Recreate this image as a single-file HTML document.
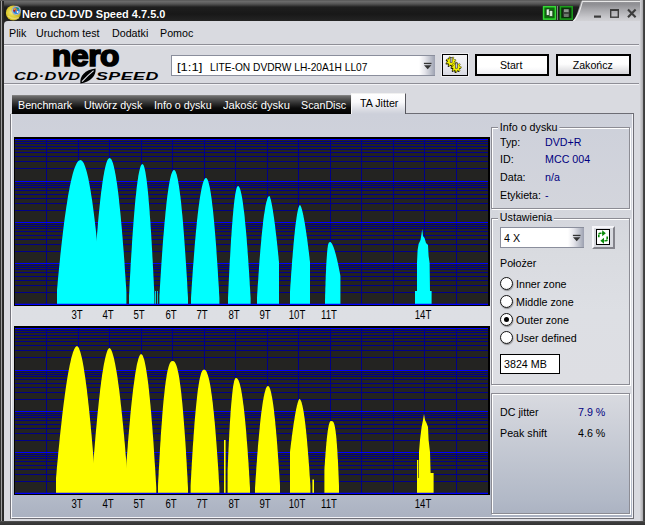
<!DOCTYPE html>
<html lang="pl">
<head>
<meta charset="utf-8">
<title>Nero CD-DVD Speed 4.7.5.0</title>
<style>
html,body{margin:0;padding:0;}
body{width:645px;height:525px;overflow:hidden;background:#3c3c3c;position:relative;
 font-family:"Liberation Sans",sans-serif;font-size:11.5px;color:#000;}
div,span{box-sizing:border-box;}
.abs{position:absolute;}
#win{position:absolute;left:0;top:0;width:645px;height:525px;overflow:hidden;}
#frameL{position:absolute;left:0;top:1px;width:4.3px;height:524px;background:linear-gradient(90deg,#303030 0,#303030 .9px,#9c9c9c 1.1px,#9c9c9c 2px,#2c2c2c 2.3px,#242424 4.3px);}
#frameR{position:absolute;left:640px;top:0;width:5px;height:525px;background:linear-gradient(90deg,#d2d2d6 0,#c6c6ca 1px,#b8b8bc 2px,#a4a4a8 3.1px,#484848 3.4px,#383838 5px);}
#frameB{position:absolute;left:0;top:521px;width:645px;height:4px;background:linear-gradient(180deg,#555 0,#3c3c3c 1.5px,#333 4px);}
#client{position:absolute;left:4px;top:21px;width:637px;height:500px;background:#d9dae0;border-top-left-radius:4px;}
#title{position:absolute;left:0;top:0;width:645px;height:22px;background:linear-gradient(180deg,#4c4c4c 0,#6e6e6e 1px,#666 2px,#585858 3.5px,#444 5px,#2c2c2c 6.2px,#1e1e1e 7.5px,#181818 14px,#242424 21px,#2c2c2c 22px);}
#titleR{position:absolute;left:574px;top:0;width:71px;height:22px;}
#ttext{position:absolute;left:22px;top:6px;transform:scaleX(.972);transform-origin:0 0;height:16px;line-height:16px;font-weight:bold;font-size:11.3px;color:#fff;white-space:nowrap;text-shadow:0 0 1px #000;}
.menu{position:absolute;top:25.2px;transform:scaleX(.93);transform-origin:0 0;height:16px;line-height:16px;font-size:11.5px;white-space:nowrap;color:#000;}
.sep{position:absolute;left:4px;width:635px;height:2px;border-top:1px solid #8e8e96;border-bottom:1px solid #f2f2f6;}
.txt{position:absolute;white-space:nowrap;transform:scaleX(.93);transform-origin:0 0;height:14px;line-height:14px;font-size:11.5px;}
.nv{color:#000080;}
.tab{position:absolute;z-index:3;top:98px;transform:scaleX(.93);transform-origin:0 0;height:14px;line-height:14px;color:#fff;font-size:11.5px;white-space:nowrap;}
.tl{position:absolute;width:40px;transform:scaleX(.8);transform-origin:50% 0;text-align:center;height:14px;line-height:14px;font-size:12px;white-space:nowrap;}
.grp{position:absolute;border:1px solid #8c8c94;box-shadow:1px 1px 0 #fff, inset 1px 1px 0 #fff;}
.radio{position:absolute;width:13px;height:13px;border-radius:50%;border:1.5px solid #141414;background:radial-gradient(circle at 50% 40%,#fff 0,#fff 55%,#dcdcdc 100%);box-shadow:0.5px 1px 1px rgba(0,0,0,.35);}
.btn{position:absolute;border:2px solid #000;background:linear-gradient(180deg,#fff 0,#fdfdfd 45%,#d4d4d8 100%);text-align:center;font-size:11.5px;}
.bt{display:inline-block;transform:scaleX(.92);transform-origin:50% 50%;}
</style>
</head>
<body>
<div id="win">
 <div id="title"></div>
 <svg class="abs" style="left:558px;top:0" width="87" height="23" viewBox="0 0 87 23">
  <defs>
   <linearGradient id="tg" x1="0" y1="0" x2="0" y2="1">
    <stop offset="0" stop-color="#9a9a9e"/><stop offset="0.15" stop-color="#8e8e92"/><stop offset="0.4" stop-color="#a8a8ac"/><stop offset="0.75" stop-color="#c8c8cc"/><stop offset="1" stop-color="#d8d8dc"/>
   </linearGradient>
  </defs>
  <path d="M24 0.6 L87 0.6 L87 23 L12 23 C16.5 21 18.6 16 21 8 C22 4 23 1.6 24 0.6 Z" fill="url(#tg)"/>
  <path d="M86 1.4 L24.4 1.4 C22.4 9 20.4 17 14.6 22" stroke="#f6f6f6" stroke-width="1.1" fill="none" opacity=".85"/>
 </svg>
 <div id="frameL"></div>
 <div id="client"></div>
 <div id="frameR"></div>
 <div id="frameB"></div>

 <!-- title icon -->
 <svg class="abs" style="left:4px;top:3px" width="20" height="20" viewBox="0 0 20 20">
  <defs>
   <radialGradient id="cd" cx="42%" cy="45%" r="60%">
    <stop offset="0" stop-color="#f6ee90"/><stop offset="0.35" stop-color="#e6d84a"/><stop offset="0.8" stop-color="#d4c020"/><stop offset="1" stop-color="#9c8a10"/>
   </radialGradient>
  </defs>
  <circle cx="9.4" cy="9.9" r="7.5" fill="url(#cd)"/>
  <path d="M4 13 C7 15.5 11 16.5 15 14.5" stroke="#f4e8a0" stroke-width="1.6" fill="none" opacity=".55"/>
  <circle cx="12.3" cy="7.5" r="4.5" fill="#c8c8cc" stroke="#8a8a90" stroke-width=".5"/>
  <circle cx="12.3" cy="7.5" r="3.4" fill="#2484dc"/>
  <path d="M9.2 7.6 L10.2 5.2 L11.6 6.4 L10.4 9.6 Z" fill="#c81a10"/>
  <path d="M9.4 6.2 l1-1 l.8 .8 l-1 1z" fill="#f8e020"/>
  <path d="M12.6 4.4 L15 5.4 L14.2 6.6 L12.4 5.8 Z" fill="#20a040"/>
  <path d="M10.6 4.8 L11.8 4.6 L13.6 8.4 L12.6 9 Z" fill="#f07030"/>
  <circle cx="13.6" cy="8.9" r="1" fill="#f4f4f4"/>
 </svg>
 <div id="ttext">Nero CD-DVD Speed 4.7.5.0</div>

 <!-- title buttons -->
 <svg class="abs" style="left:541px;top:4px" width="36" height="18" viewBox="0 0 36 18">
  <rect x="1.8" y="1.9" width="13.4" height="14" rx="1.2" fill="#0c6c0c"/>
  <rect x="2.6" y="2.7" width="11.8" height="12.4" fill="none" stroke="#34d834" stroke-width="1.5"/>
  <rect x="5.2" y="5" width="3.4" height="6.4" fill="#e4f4e4" stroke="#143814" stroke-width=".7"/>
  <rect x="8.2" y="6.4" width="3.6" height="6.2" fill="#d4ecd4" stroke="#143814" stroke-width=".7"/>
  <rect x="16" y="2" width=".8" height="14" fill="#9a9a9a"/>
  <rect x="18.6" y="1.9" width="13.4" height="14" rx="1.2" fill="#063c06"/>
  <rect x="19.4" y="2.7" width="11.8" height="12.4" fill="none" stroke="#1c9c1c" stroke-width="1.5"/>
  <rect x="21.8" y="5" width="7" height="8" fill="#3c443c" stroke="#141a14" stroke-width=".7"/>
  <rect x="23" y="5.2" width="4.6" height="2.8" fill="#8c988c"/>
  <rect x="23" y="10" width="4.6" height="3" fill="#6c786c"/>
 </svg>
 <svg class="abs" style="left:590px;top:4px" width="50" height="18" viewBox="0 0 50 18">
  <rect x="4" y="11.5" width="7" height="2.2" fill="#3c3c3c"/>
  <rect x="20.7" y="5.8" width="7.6" height="7.4" fill="none" stroke="#3c3c3c" stroke-width="1.4"/>
  <rect x="20" y="5" width="9" height="2" fill="#3c3c3c"/>
  <path d="M38 5.5 L45.6 13.3 M45.6 5.5 L38 13.3" stroke="#3c3c3c" stroke-width="2.1" fill="none"/>
 </svg>

 <!-- menu -->
 <div class="menu" style="left:9px">Plik</div>
 <div class="menu" style="left:36px">Uruchom test</div>
 <div class="menu" style="left:112px">Dodatki</div>
 <div class="menu" style="left:160px">Pomoc</div>
 <div class="sep" style="top:44px"></div>
 <div class="sep" style="top:83px"></div>

 <!-- logo -->
 <div class="abs" id="nero" style="left:52.4px;top:38.6px;height:34px;line-height:34px;font-size:29px;font-weight:bold;letter-spacing:-0.4px;color:#000;white-space:nowrap;-webkit-text-stroke:1.6px #000;transform:scaleX(1.095);transform-origin:0 0;">nero</div>
 <div class="abs" id="cd1" style="left:14px;top:68.7px;height:15px;line-height:15px;font-size:11px;font-weight:bold;font-style:italic;color:#000;white-space:nowrap;transform:scaleX(1.49);transform-origin:0 50%;letter-spacing:.3px;">CD·DVD</div>
 <div class="abs" id="cd2" style="left:96px;top:68.7px;height:15px;line-height:15px;font-size:11px;font-weight:bold;font-style:italic;color:#000;white-space:nowrap;transform:scaleX(1.62);transform-origin:0 50%;letter-spacing:.3px;">SPEED</div>
 <svg class="abs" style="left:78px;top:67px" width="20" height="18" viewBox="0 0 20 18">
  <path d="M2.4 16.4 C1.4 9.5 7 2.6 17.6 1.6 C18.4 8.4 12.6 15.4 2.4 16.4 Z" fill="#000"/>
  <path d="M4 14.6 C7.4 11 11.4 7 15.6 3.6" stroke="#d9dae0" stroke-width="1.2" fill="none"/>
 </svg>

 <!-- drive combo -->
 <div class="abs" style="left:171px;top:55px;width:264px;height:21px;border:1px solid #8a8e9c;border-right:none;background:#fff;"></div>
 <div class="abs" style="left:419px;top:56px;width:16px;height:19px;background:linear-gradient(90deg,#fff 0,#e6e6ec 35%,#b4b8c4 80%,#9ca0b0 100%);"></div>
 <svg class="abs" style="left:421.5px;top:60px" width="12" height="12" viewBox="0 0 12 12">
  <rect x="1.9" y="2.8" width="7.6" height="1.3" fill="#333"/>
  <path d="M2 5.2 L9.4 5.2 L5.7 9.2 Z" fill="#333"/>
 </svg>
 <div class="txt" id="drv0" style="left:177.3px;top:59.5px;transform:scaleX(1.13);">[1:1]</div>
 <div class="txt" id="drv" style="left:209.6px;top:59.5px;transform:scaleX(.887);">LITE-ON DVDRW LH-20A1H LL07</div>

 <!-- options button -->
 <div class="abs" style="left:442px;top:54px;width:26px;height:22px;border:1.9px solid #000;background:linear-gradient(180deg,#f6f6f8 0,#ececf0 50%,#d8d9e2 100%);box-shadow:0 0 0 1px rgba(255,255,255,.55);"></div>
 <svg class="abs" style="left:442px;top:54.6px" width="26" height="22" viewBox="0 0 26 22">
  <path d="M12.5 7.3 L13.8 8.3 L13.2 9.4 L11.7 8.9 L11.0 9.5 L11.2 11.1 L10.1 11.5 L9.3 10.1 L8.4 10.0 L7.4 11.3 L6.3 10.7 L6.8 9.2 L6.2 8.5 L4.6 8.7 L4.2 7.6 L5.6 6.8 L5.7 5.9 L4.4 4.9 L5.0 3.8 L6.5 4.3 L7.2 3.7 L7.0 2.1 L8.1 1.7 L8.9 3.1 L9.8 3.2 L10.8 1.9 L11.9 2.5 L11.4 4.0 L12.0 4.7 L13.6 4.5 L14.0 5.6 L12.6 6.4 Z" fill="#000" transform="translate(-0.7,0.8)"/>
  <path d="M17.3 14.1 L18.2 15.5 L17.2 16.3 L15.9 15.4 L15.1 15.7 L14.8 17.3 L13.5 17.2 L13.3 15.6 L12.5 15.3 L11.1 16.2 L10.3 15.2 L11.2 13.9 L10.9 13.1 L9.3 12.8 L9.4 11.5 L11.0 11.3 L11.3 10.5 L10.4 9.1 L11.4 8.3 L12.7 9.2 L13.5 8.9 L13.8 7.3 L15.1 7.4 L15.3 9.0 L16.1 9.3 L17.5 8.4 L18.3 9.4 L17.4 10.7 L17.7 11.5 L19.3 11.8 L19.2 13.1 L17.6 13.3 Z" fill="#000" transform="translate(-0.7,0.8)"/>
  <path d="M12.5 7.3 L13.8 8.3 L13.2 9.4 L11.7 8.9 L11.0 9.5 L11.2 11.1 L10.1 11.5 L9.3 10.1 L8.4 10.0 L7.4 11.3 L6.3 10.7 L6.8 9.2 L6.2 8.5 L4.6 8.7 L4.2 7.6 L5.6 6.8 L5.7 5.9 L4.4 4.9 L5.0 3.8 L6.5 4.3 L7.2 3.7 L7.0 2.1 L8.1 1.7 L8.9 3.1 L9.8 3.2 L10.8 1.9 L11.9 2.5 L11.4 4.0 L12.0 4.7 L13.6 4.5 L14.0 5.6 L12.6 6.4 Z" fill="#f4f400" stroke="#3c3a00" stroke-width=".5"/>
  <path d="M17.3 14.1 L18.2 15.5 L17.2 16.3 L15.9 15.4 L15.1 15.7 L14.8 17.3 L13.5 17.2 L13.3 15.6 L12.5 15.3 L11.1 16.2 L10.3 15.2 L11.2 13.9 L10.9 13.1 L9.3 12.8 L9.4 11.5 L11.0 11.3 L11.3 10.5 L10.4 9.1 L11.4 8.3 L12.7 9.2 L13.5 8.9 L13.8 7.3 L15.1 7.4 L15.3 9.0 L16.1 9.3 L17.5 8.4 L18.3 9.4 L17.4 10.7 L17.7 11.5 L19.3 11.8 L19.2 13.1 L17.6 13.3 Z" fill="#f4f400" stroke="#3c3a00" stroke-width=".5"/>
  <rect x="8.2" y="2.4" width="1.9" height="5.2" fill="#c8c8d0" stroke="#30303a" stroke-width=".6"/>
  <rect x="13.4" y="8" width="1.9" height="5.2" fill="#c8c8d0" stroke="#30303a" stroke-width=".6"/>
 </svg>

 <div class="btn" style="left:475px;top:54px;width:74px;height:22px;line-height:18px;background:linear-gradient(180deg,#fff 0,#fff 60%,#f0f0f4 100%);"><span class="bt" style="margin-right:2px">Start</span></div>
 <div class="btn" style="left:556px;top:54px;width:75px;height:22px;line-height:18px;"><span class="bt" style="margin-right:2px">Zakończ</span></div>

 <!-- tab strip -->
 <div class="abs" style="left:12px;top:95px;width:339px;height:19.4px;z-index:2;background:linear-gradient(180deg,#8e8e8e 0,#6a6a6a 1.5px,#4a4a4a 5px,#2a2a2a 9px,#0c0c0c 13px,#000 19px);"></div>
 <div class="tab" style="left:18.4px">Benchmark</div>
 <div class="tab" style="left:84px">Utwórz dysk</div>
 <div class="tab" style="left:154px">Info o dysku</div>
 <div class="tab" style="left:223px;transform:scaleX(.968)">Jakość dysku</div>
 <div class="tab" style="left:301px">ScanDisc</div>

 <!-- tab panel -->
 <div class="abs" style="left:10px;top:114px;width:1px;height:405px;background:#74747c;"></div>
 <div class="abs" id="panel" style="left:11px;top:113px;width:623px;height:406px;border-left:1px solid #f8f8fa;border-top:1px solid #6c6c74;border-right:1px solid #6e6e76;border-bottom:1px solid #6e6e76;background:linear-gradient(180deg,#cdd0da 0,#d3d5dc 93px,#d9dbe0 139px,#dddfe4 197px,#dddee3 268px,#b2b9c7 385px,#a9b0c0 406px);box-shadow:inset -1px -1px 0 #f4f4f8;"></div>
 <!-- active tab -->
 <div class="abs" style="left:351px;top:93px;width:55px;height:21px;border-left:1px solid #f8f8f8;border-top:1px solid #f0f0f0;border-right:1px solid #55555c;background:linear-gradient(180deg,#fff 0,#fafafc 40%,#d6d8e0 85%,#cdd0da 100%);"></div>
 <div class="txt" style="left:360px;top:96px;">TA Jitter</div>

<svg id="charts" width="645" height="525" viewBox="0 0 645 525" style="position:absolute;left:0;top:0">
<rect x="14" y="137" width="476" height="169" fill="#000"/>
<rect x="15" y="139" width="473" height="166" fill="#232321"/>
<path d="M15 168.5H488M15 161.5H488M15 156.5H488M15 152.5H488M15 149.5H488M15 146.5H488M15 143.5H488M15 141.5H488M15 210.5H488M15 203.5H488M15 198.5H488M15 194.5H488M15 190.5H488M15 187.5H488M15 185.5H488M15 183.5H488M15 251.5H488M15 244.5H488M15 239.5H488M15 235.5H488M15 231.5H488M15 228.5H488M15 226.5H488M15 224.5H488M15 292.5H488M15 285.5H488M15 280.5H488M15 276.5H488M15 272.5H488M15 269.5H488M15 267.5H488M15 265.5H488" stroke="#00008a" stroke-width="1" fill="none" shape-rendering="crispEdges"/>
<path d="M46.5 139.5V304.5M78.5 139.5V304.5M109.5 139.5V304.5M141.5 139.5V304.5M172.5 139.5V304.5M204.5 139.5V304.5M235.5 139.5V304.5M267.5 139.5V304.5M298.5 139.5V304.5M330.5 139.5V304.5M361.5 139.5V304.5M393.5 139.5V304.5M424.5 139.5V304.5M456.5 139.5V304.5" stroke="#00008a" stroke-width="1" fill="none" shape-rendering="crispEdges"/>
<path d="M15 139.5H488M15 181.5H488M15 222.5H488M15 263.5H488" stroke="#0000ff" stroke-width="1.15" fill="none"/>
<polygon points="57,304.5 57,290 57.5,284.8 57.9,279.8 58.4,274.8 58.9,269.8 59.4,265 59.9,260.2 60.3,255.6 60.8,251 61.3,246.5 61.8,242 62.3,237.7 62.8,233.5 63.3,229.3 63.8,225.3 64.3,221.3 64.8,217.4 65.4,213.6 65.9,209.9 66.4,206.4 67,202.9 67.5,199.5 68,196.2 68.6,193.1 69.2,190 69.7,187.1 70.3,184.2 70.9,181.5 71.5,178.9 72.1,176.5 72.7,174.1 73.3,172 73.9,169.9 74.6,168 75.3,166.2 76,164.7 76.7,163.3 77.5,162.1 78.3,161.1 79.2,160.4 80.4,160 81.6,160.4 82.4,161.2 83.2,162.3 83.9,163.6 84.6,165.2 85.2,166.9 85.9,168.9 86.5,171 87.1,173.3 87.7,175.7 88.3,178.3 88.8,181.1 89.4,183.9 89.9,186.9 90.5,190.1 91,193.4 91.5,196.8 92.1,200.3 92.6,203.9 93.1,207.7 93.6,211.5 94.1,215.5 94.6,219.6 95.1,223.8 95.6,228.1 96.1,232.5 96.5,237 97,241.7 97.5,246.4 98,251.2 98.4,256.1 98.9,261.1 99.3,266.2 99.8,271.4 100.3,276.7 100.7,282.1 101.2,287.6 101.6,293.1 102.1,298.8 102.5,304.5" fill="#00ffff"/>
<polygon points="92.2,304.5 92.5,298.7 92.9,293 93.3,287.3 93.6,281.8 94,276.3 94.3,271 94.7,265.7 95,260.5 95.4,255.4 95.8,250.5 96.1,245.6 96.5,240.8 96.9,236.1 97.3,231.5 97.7,227.1 98,222.7 98.4,218.4 98.8,214.3 99.2,210.3 99.6,206.3 100,202.5 100.4,198.8 100.8,195.3 101.2,191.8 101.7,188.5 102.1,185.3 102.5,182.3 103,179.3 103.4,176.6 103.9,173.9 104.3,171.5 104.8,169.2 105.3,167 105.8,165 106.3,163.3 106.8,161.7 107.4,160.3 108,159.2 108.7,158.4 109.6,158 110.5,158.4 111.1,159.1 111.7,160.1 112.3,161.4 112.8,162.8 113.3,164.4 113.8,166.2 114.2,168.2 114.7,170.3 115.1,172.6 115.6,175 116,177.5 116.4,180.2 116.9,183 117.3,185.9 117.7,188.9 118.1,192.1 118.5,195.3 118.9,198.7 119.2,202.2 119.6,205.8 120,209.5 120.4,213.3 120.8,217.2 121.1,221.2 121.5,225.3 121.9,229.4 122.2,233.7 122.6,238.1 122.9,242.6 123.3,247.1 123.7,251.8 124,256.5 124.4,261.3 124.7,266.2 125,271.2 125.4,276.3 125.7,281.4 126.1,286.7 126.4,292 126.4,304.5" fill="#00ffff"/>
<polygon points="129,304.5 129,296 129.3,290.8 129.5,285.6 129.8,280.5 130.1,275.5 130.4,270.6 130.6,265.8 130.9,261 131.2,256.4 131.5,251.8 131.8,247.3 132,242.9 132.3,238.6 132.6,234.4 132.9,230.3 133.2,226.2 133.5,222.3 133.8,218.5 134.1,214.7 134.4,211.1 134.7,207.5 135,204.1 135.3,200.8 135.6,197.6 136,194.5 136.3,191.5 136.6,188.6 136.9,185.9 137.3,183.2 137.6,180.7 138,178.4 138.3,176.1 138.7,174.1 139.1,172.1 139.5,170.3 139.9,168.7 140.3,167.3 140.7,166.1 141.2,165.1 141.7,164.4 142.4,164 143,164.4 143.5,165.1 143.9,166.1 144.3,167.3 144.7,168.7 145,170.3 145.4,172.1 145.7,174.1 146,176.1 146.4,178.4 146.7,180.7 147,183.2 147.3,185.9 147.6,188.6 147.9,191.5 148.2,194.5 148.5,197.6 148.7,200.8 149,204.1 149.3,207.5 149.6,211.1 149.8,214.7 150.1,218.5 150.4,222.3 150.6,226.2 150.9,230.3 151.2,234.4 151.4,238.6 151.7,242.9 151.9,247.3 152.2,251.8 152.4,256.4 152.7,261 152.9,265.8 153.2,270.6 153.4,275.5 153.7,280.5 153.9,285.6 154.2,290.8 154.4,296 154.4,304.5" fill="#00ffff"/>
<polygon points="159.4,304.5 159.4,296 159.7,291 160,286.1 160.3,281.2 160.6,276.5 160.9,271.8 161.2,267.1 161.5,262.6 161.8,258.2 162.1,253.8 162.4,249.5 162.7,245.3 163,241.2 163.3,237.2 163.7,233.2 164,229.4 164.3,225.6 164.6,222 165,218.4 165.3,214.9 165.6,211.6 166,208.3 166.3,205.1 166.6,202 167,199.1 167.3,196.2 167.7,193.5 168.1,190.9 168.4,188.4 168.8,186 169.2,183.7 169.6,181.6 170,179.6 170.4,177.7 170.8,176.1 171.2,174.5 171.7,173.2 172.2,172 172.7,171 173.2,170.3 174,170 174.7,170.3 175.3,171.1 175.8,172 176.2,173.2 176.7,174.6 177.1,176.2 177.5,177.9 177.9,179.7 178.2,181.8 178.6,183.9 179,186.2 179.3,188.6 179.7,191.2 180,193.9 180.4,196.6 180.7,199.5 181.1,202.6 181.4,205.7 181.7,208.9 182,212.2 182.4,215.7 182.7,219.2 183,222.8 183.3,226.5 183.6,230.3 183.9,234.2 184.2,238.2 184.5,242.3 184.8,246.5 185.1,250.8 185.4,255.1 185.7,259.6 186,264.1 186.3,268.7 186.6,273.4 186.9,278.1 187.2,283 187.4,287.9 187.7,292.9 188,298 188,304.5" fill="#00ffff"/>
<polygon points="191,304.5 191,298 191.3,293.2 191.6,288.5 191.9,283.9 192.2,279.4 192.5,274.9 192.8,270.5 193.1,266.2 193.5,262 193.8,257.8 194.1,253.7 194.4,249.7 194.7,245.8 195,242 195.4,238.2 195.7,234.6 196,231 196.4,227.5 196.7,224.1 197,220.8 197.4,217.6 197.7,214.5 198.1,211.4 198.4,208.5 198.8,205.7 199.2,203 199.5,200.4 199.9,197.9 200.3,195.5 200.7,193.2 201.1,191.1 201.5,189 201.9,187.1 202.3,185.4 202.7,183.8 203.2,182.3 203.6,181 204.1,179.9 204.6,179 205.2,178.3 206,178 206.7,178.3 207.2,179 207.7,179.9 208.1,181 208.5,182.3 208.9,183.8 209.3,185.4 209.7,187.1 210.1,189 210.4,191.1 210.8,193.2 211.1,195.5 211.5,197.9 211.8,200.4 212.1,203 212.4,205.7 212.8,208.5 213.1,211.4 213.4,214.5 213.7,217.6 214,220.8 214.3,224.1 214.6,227.5 214.9,231 215.2,234.6 215.5,238.2 215.8,242 216.1,245.8 216.4,249.7 216.6,253.7 216.9,257.8 217.2,262 217.5,266.2 217.8,270.5 218,274.9 218.3,279.4 218.6,283.9 218.9,288.5 219.1,293.2 219.4,298 219.4,304.5" fill="#00ffff"/>
<polygon points="228,304.5 228,298 228.2,293.6 228.4,289.2 228.6,284.9 228.8,280.6 229,276.5 229.2,272.4 229.4,268.3 229.6,264.4 229.8,260.5 230.1,256.7 230.3,253 230.5,249.3 230.7,245.7 230.9,242.2 231.1,238.8 231.4,235.5 231.6,232.2 231.8,229 232,225.9 232.3,222.9 232.5,220 232.7,217.2 233,214.5 233.2,211.9 233.4,209.3 233.7,206.9 233.9,204.5 234.2,202.3 234.4,200.2 234.7,198.2 235,196.3 235.2,194.5 235.5,192.9 235.8,191.4 236.1,190 236.4,188.8 236.7,187.8 237.1,186.9 237.5,186.3 238,186 238.7,186.3 239.1,186.9 239.6,187.8 240,188.8 240.4,190 240.8,191.4 241.1,192.9 241.5,194.5 241.8,196.3 242.2,198.2 242.5,200.2 242.8,202.3 243.1,204.5 243.4,206.9 243.7,209.3 244.1,211.9 244.4,214.5 244.7,217.2 244.9,220 245.2,222.9 245.5,225.9 245.8,229 246.1,232.2 246.4,235.5 246.7,238.8 246.9,242.2 247.2,245.7 247.5,249.3 247.7,253 248,256.7 248.3,260.5 248.5,264.4 248.8,268.3 249.1,272.4 249.3,276.5 249.6,280.6 249.8,284.9 250.1,289.2 250.3,293.6 250.6,298 250.6,304.5" fill="#00ffff"/>
<polygon points="257,304.5 257,298 257.2,294 257.5,290 257.7,286 258,282.2 258.3,278.4 258.5,274.6 258.8,271 259,267.4 259.3,263.8 259.5,260.4 259.8,257 260.1,253.6 260.3,250.4 260.6,247.2 260.9,244.1 261.2,241 261.4,238.1 261.7,235.2 262,232.4 262.3,229.6 262.6,227 262.9,224.4 263.1,221.9 263.4,219.5 263.7,217.2 264,215 264.4,212.9 264.7,210.9 265,208.9 265.3,207.1 265.6,205.4 266,203.8 266.3,202.3 266.7,200.9 267.1,199.7 267.4,198.6 267.8,197.6 268.3,196.8 268.8,196.3 269.4,196 269.6,196.2 269.8,196.5 270,197 270.2,197.7 270.4,198.4 270.7,199.2 270.9,200.1 271.1,201 271.3,202.1 271.6,203.2 271.8,204.4 272,205.6 272.3,206.9 272.5,208.3 272.8,209.7 273,211.2 273.2,212.8 273.5,214.4 273.7,216.1 274,217.8 274.2,219.5 274.5,221.4 274.7,223.2 275,225.1 275.2,227.1 275.4,229.1 275.7,231.2 275.9,233.3 276.2,235.5 276.5,237.7 276.7,239.9 277,242.2 277.2,244.5 277.5,246.9 277.7,249.3 278,251.8 278.2,254.3 278.5,256.8 278.7,259.4 279,262 279,304.5" fill="#00ffff"/>
<polygon points="290,304.5 290,292 290.2,288.5 290.4,285.1 290.7,281.8 290.9,278.5 291.1,275.3 291.3,272.1 291.6,269 291.8,265.9 292,262.9 292.2,259.9 292.5,257 292.7,254.2 292.9,251.4 293.2,248.7 293.4,246 293.6,243.4 293.9,240.9 294.1,238.4 294.3,236 294.6,233.7 294.8,231.4 295,229.2 295.3,227.1 295.5,225.1 295.8,223.1 296,221.2 296.3,219.4 296.5,217.7 296.8,216 297,214.5 297.3,213 297.6,211.6 297.8,210.4 298.1,209.2 298.4,208.1 298.7,207.2 299,206.4 299.3,205.7 299.6,205.2 300,205 300.2,205.2 300.4,205.5 300.7,205.9 300.9,206.4 301.2,207 301.4,207.7 301.6,208.5 301.9,209.3 302.1,210.2 302.4,211.2 302.6,212.2 302.9,213.3 303.1,214.4 303.4,215.6 303.6,216.9 303.9,218.2 304.1,219.5 304.4,220.9 304.6,222.3 304.9,223.8 305.1,225.3 305.4,226.9 305.6,228.5 305.9,230.2 306.1,231.9 306.4,233.6 306.6,235.4 306.9,237.2 307.2,239.1 307.4,241 307.7,242.9 307.9,244.9 308.2,246.9 308.4,248.9 308.7,251 309,253.2 309.2,255.3 309.5,257.5 309.7,259.7 310,262 310,304.5" fill="#00ffff"/>
<polygon points="325,304.5 325,300 325.1,297.7 325.1,295.4 325.2,293.2 325.3,291 325.3,288.8 325.4,286.7 325.5,284.6 325.5,282.6 325.6,280.6 325.7,278.6 325.7,276.7 325.8,274.8 325.9,272.9 326,271.1 326.1,269.3 326.1,267.6 326.2,265.9 326.3,264.3 326.4,262.7 326.5,261.1 326.6,259.6 326.7,258.2 326.8,256.8 326.9,255.4 327,254.1 327.1,252.8 327.2,251.6 327.3,250.4 327.4,249.4 327.5,248.3 327.7,247.3 327.8,246.4 327.9,245.6 328.1,244.8 328.3,244.1 328.5,243.5 328.7,242.9 329,242.5 329.3,242.2 330.2,242 330.5,242.1 330.8,242.3 331,242.5 331.3,242.9 331.6,243.2 331.9,243.6 332.1,244.1 332.4,244.6 332.6,245.1 332.9,245.7 333.2,246.3 333.4,247 333.7,247.6 333.9,248.3 334.2,249.1 334.4,249.8 334.7,250.6 334.9,251.5 335.2,252.3 335.4,253.2 335.7,254.1 335.9,255.1 336.2,256 336.4,257 336.7,258 336.9,259.1 337.2,260.1 337.4,261.2 337.7,262.3 337.9,263.5 338.2,264.6 338.4,265.8 338.7,267 338.9,268.2 339.2,269.5 339.4,270.7 339.7,272 339.9,273.3 340.2,274.7 340.4,276 340.4,304.5" fill="#00ffff"/>
<polygon points="422.2,229 423,236 424.5,238 426,243 428,245 428.6,256 429.6,263 430,291 431.6,291 431.6,304.5 415,304.5 415,291 417,291 417,263 417.6,250 418.6,244 420.5,240 421.5,234" fill="#00ffff"/>
<polygon points="155.2,291 156,291 156,304.5 155.2,304.5" fill="#00ffff"/>
<polygon points="157,291 157.7,291 157.7,304.5 157,304.5" fill="#00ffff"/>
<path d="M15 304.4H488" stroke="#0000ff" stroke-width="1.4" fill="none"/>
<rect x="14" y="326" width="476" height="169" fill="#000"/>
<rect x="15" y="328" width="473" height="166" fill="#232321"/>
<path d="M15 357.5H488M15 350.5H488M15 345.5H488M15 341.5H488M15 338.5H488M15 335.5H488M15 332.5H488M15 330.5H488M15 399.5H488M15 392.5H488M15 387.5H488M15 383.5H488M15 379.5H488M15 376.5H488M15 374.5H488M15 372.5H488M15 440.5H488M15 433.5H488M15 428.5H488M15 424.5H488M15 420.5H488M15 417.5H488M15 415.5H488M15 413.5H488M15 481.5H488M15 474.5H488M15 469.5H488M15 465.5H488M15 461.5H488M15 458.5H488M15 456.5H488M15 454.5H488" stroke="#00008a" stroke-width="1" fill="none" shape-rendering="crispEdges"/>
<path d="M46.5 328.5V493.5M78.5 328.5V493.5M109.5 328.5V493.5M141.5 328.5V493.5M172.5 328.5V493.5M204.5 328.5V493.5M235.5 328.5V493.5M267.5 328.5V493.5M298.5 328.5V493.5M330.5 328.5V493.5M361.5 328.5V493.5M393.5 328.5V493.5M424.5 328.5V493.5M456.5 328.5V493.5" stroke="#00008a" stroke-width="1" fill="none" shape-rendering="crispEdges"/>
<path d="M15 328.5H488M15 370.5H488M15 411.5H488M15 452.5H488" stroke="#0000ff" stroke-width="1.15" fill="none"/>
<polygon points="56,493.5 56,478 56.5,472.8 56.9,467.6 57.4,462.5 57.9,457.5 58.3,452.6 58.8,447.8 59.3,443 59.7,438.4 60.2,433.8 60.7,429.3 61.2,424.9 61.7,420.6 62.1,416.4 62.6,412.3 63.1,408.2 63.6,404.3 64.1,400.5 64.6,396.7 65.1,393.1 65.6,389.5 66.1,386.1 66.6,382.8 67.1,379.6 67.6,376.5 68.1,373.5 68.7,370.6 69.2,367.9 69.7,365.2 70.3,362.7 70.8,360.4 71.3,358.1 71.9,356.1 72.5,354.1 73,352.3 73.6,350.7 74.2,349.3 74.9,348.1 75.5,347.1 76.2,346.4 77,346 77.7,346.4 78.4,347.2 79,348.3 79.5,349.7 80.1,351.3 80.6,353.1 81.1,355.1 81.7,357.2 82.2,359.6 82.7,362.1 83.2,364.7 83.7,367.5 84.1,370.4 84.6,373.5 85.1,376.7 85.6,380 86,383.5 86.5,387.1 87,390.8 87.4,394.7 87.9,398.6 88.3,402.7 88.8,406.8 89.2,411.1 89.7,415.5 90.1,420 90.6,424.6 91,429.4 91.5,434.2 91.9,439.1 92.3,444.1 92.8,449.2 93.2,454.4 93.6,459.7 94.1,465.1 94.5,470.6 94.9,476.2 95.4,481.9 95.8,487.6 96.2,493.5" fill="#ffff00"/>
<polygon points="91.1,493.5 91.5,487.7 91.9,482 92.3,476.4 92.7,470.9 93.1,465.5 93.5,460.2 93.9,455 94.4,449.8 94.8,444.8 95.2,439.8 95.6,435 96,430.2 96.5,425.6 96.9,421 97.3,416.6 97.7,412.3 98.2,408 98.6,403.9 99,399.9 99.5,396 99.9,392.2 100.3,388.6 100.8,385 101.2,381.6 101.7,378.3 102.1,375.1 102.6,372.1 103.1,369.2 103.5,366.4 104,363.8 104.5,361.4 105,359.1 105.5,356.9 106,355 106.5,353.2 107,351.7 107.5,350.3 108.1,349.2 108.7,348.4 109.4,348 110.2,348.4 110.8,349.2 111.4,350.3 112,351.7 112.5,353.2 113,355 113.6,356.9 114.1,359.1 114.6,361.4 115.1,363.8 115.6,366.4 116.1,369.2 116.6,372.1 117.1,375.1 117.6,378.3 118,381.6 118.5,385 119,388.6 119.5,392.2 119.9,396 120.4,399.9 120.8,403.9 121.3,408 121.7,412.3 122.2,416.6 122.6,421 123.1,425.6 123.5,430.2 124,435 124.4,439.8 124.9,444.8 125.3,449.8 125.7,455 126.2,460.2 126.6,465.5 127,470.9 127.5,476.4 127.9,482 128.3,487.7 128.8,493.5" fill="#ffff00"/>
<polygon points="124.3,493.5 124.7,488 125,482.5 125.4,477.1 125.8,471.9 126.2,466.7 126.5,461.6 126.9,456.5 127.3,451.6 127.7,446.8 128,442 128.4,437.4 128.8,432.8 129.2,428.4 129.6,424 130,419.8 130.3,415.6 130.7,411.5 131.1,407.6 131.5,403.8 131.9,400 132.3,396.4 132.7,392.9 133.1,389.5 133.5,386.2 134,383 134.4,380 134.8,377.1 135.2,374.3 135.6,371.7 136.1,369.2 136.5,366.8 136.9,364.6 137.4,362.6 137.9,360.7 138.3,359 138.8,357.5 139.3,356.2 139.8,355.2 140.4,354.4 141,354 141.8,354.4 142.4,355.1 142.9,356.1 143.4,357.4 143.9,358.8 144.4,360.4 144.8,362.2 145.2,364.2 145.6,366.3 146,368.6 146.4,371 146.8,373.5 147.2,376.2 147.6,379 148,381.9 148.4,384.9 148.7,388.1 149.1,391.3 149.4,394.7 149.8,398.2 150.1,401.8 150.5,405.5 150.8,409.3 151.2,413.2 151.5,417.2 151.8,421.3 152.2,425.4 152.5,429.7 152.8,434.1 153.2,438.6 153.5,443.1 153.8,447.8 154.1,452.5 154.4,457.3 154.7,462.2 155.1,467.2 155.4,472.3 155.7,477.4 156,482.7 156.3,488 156.3,493.5" fill="#ffff00"/>
<polygon points="158,493.5 158,486 158.2,481 158.5,476.2 158.7,471.3 159,466.6 159.3,462 159.5,457.4 159.8,452.9 160,448.5 160.3,444.1 160.6,439.9 160.8,435.7 161.1,431.6 161.4,427.6 161.7,423.7 162,419.9 162.2,416.2 162.5,412.6 162.8,409 163.1,405.6 163.4,402.2 163.7,399 164.1,395.8 164.4,392.8 164.7,389.9 165,387 165.4,384.3 165.7,381.7 166.1,379.2 166.5,376.8 166.8,374.6 167.2,372.5 167.6,370.5 168.1,368.7 168.5,367 169,365.5 169.5,364.1 170,363 170.6,362 171.4,361.3 172.6,361 173.9,361.3 174.7,362.1 175.3,363 175.9,364.2 176.4,365.6 176.9,367.1 177.4,368.8 177.8,370.7 178.3,372.7 178.7,374.8 179.1,377.1 179.5,379.5 179.8,382 180.2,384.7 180.6,387.4 180.9,390.3 181.3,393.3 181.6,396.4 181.9,399.6 182.3,402.9 182.6,406.3 182.9,409.8 183.2,413.4 183.5,417.1 183.8,420.9 184.1,424.7 184.4,428.7 184.7,432.8 185,436.9 185.3,441.1 185.6,445.5 185.9,449.9 186.1,454.4 186.4,458.9 186.7,463.6 186.9,468.3 187.2,473.1 187.5,478 187.7,483 188,488 188,493.5" fill="#ffff00"/>
<polygon points="190.6,493.5 190.6,486 190.8,481.4 191.1,476.8 191.3,472.3 191.6,467.9 191.8,463.6 192.1,459.3 192.3,455.2 192.6,451.1 192.8,447 193.1,443.1 193.4,439.2 193.6,435.4 193.9,431.7 194.2,428 194.4,424.5 194.7,421 195,417.6 195.3,414.3 195.6,411.1 195.9,408 196.2,405 196.5,402 196.8,399.2 197.1,396.5 197.4,393.8 197.7,391.3 198,388.9 198.4,386.6 198.7,384.4 199.1,382.3 199.4,380.3 199.8,378.5 200.2,376.8 200.6,375.2 201,373.8 201.4,372.5 201.9,371.4 202.4,370.6 203.1,369.9 204,369.6 205.1,369.9 205.8,370.6 206.4,371.5 206.9,372.6 207.4,373.9 207.9,375.3 208.4,376.9 208.8,378.6 209.3,380.5 209.7,382.5 210.1,384.6 210.5,386.8 210.9,389.2 211.2,391.7 211.6,394.2 212,396.9 212.3,399.7 212.7,402.6 213,405.6 213.3,408.7 213.7,411.8 214,415.1 214.3,418.4 214.7,421.9 215,425.4 215.3,429 215.6,432.7 215.9,436.5 216.2,440.4 216.5,444.3 216.8,448.3 217.1,452.5 217.4,456.6 217.7,460.9 218,465.2 218.3,469.6 218.6,474.1 218.8,478.7 219.1,483.3 219.4,488 219.4,493.5" fill="#ffff00"/>
<polygon points="227.6,493.5 227.6,470 227.8,466.3 227.9,462.8 228.1,459.2 228.2,455.7 228.4,452.3 228.5,448.9 228.7,445.6 228.8,442.4 229,439.2 229.2,436.1 229.3,433 229.5,430 229.7,427.1 229.8,424.2 230,421.4 230.2,418.6 230.4,416 230.5,413.3 230.7,410.8 230.9,408.3 231.1,406 231.3,403.6 231.5,401.4 231.7,399.2 231.9,397.2 232.1,395.2 232.3,393.2 232.5,391.4 232.7,389.7 232.9,388 233.1,386.5 233.4,385 233.6,383.7 233.9,382.4 234.1,381.3 234.4,380.3 234.7,379.5 235,378.8 235.4,378.3 236,378 237,378.3 237.6,378.9 238.2,379.7 238.7,380.8 239.1,381.9 239.6,383.3 240,384.8 240.4,386.4 240.8,388.1 241.2,390 241.5,391.9 241.9,394 242.2,396.2 242.6,398.5 242.9,400.9 243.2,403.4 243.6,406 243.9,408.7 244.2,411.4 244.5,414.3 244.8,417.2 245.1,420.3 245.4,423.4 245.7,426.6 246,429.9 246.3,433.2 246.5,436.7 246.8,440.2 247.1,443.8 247.4,447.4 247.7,451.2 247.9,455 248.2,458.9 248.5,462.8 248.7,466.8 249,470.9 249.2,475.1 249.5,479.3 249.7,483.6 250,488 250,493.5" fill="#ffff00"/>
<polygon points="255,493.5 255,488 255.3,484 255.5,480 255.8,476 256.1,472.2 256.3,468.4 256.6,464.6 256.9,461 257.1,457.4 257.4,453.8 257.7,450.4 257.9,447 258.2,443.6 258.5,440.4 258.8,437.2 259.1,434.1 259.4,431 259.7,428.1 259.9,425.2 260.2,422.4 260.5,419.6 260.8,417 261.1,414.4 261.4,411.9 261.8,409.5 262.1,407.2 262.4,405 262.7,402.9 263,400.9 263.4,398.9 263.7,397.1 264.1,395.4 264.4,393.8 264.8,392.3 265.2,390.9 265.5,389.7 265.9,388.6 266.4,387.6 266.8,386.8 267.3,386.3 268,386 268.6,386.3 269.1,386.8 269.5,387.6 269.9,388.5 270.3,389.6 270.6,390.8 271,392.1 271.3,393.6 271.6,395.2 272,396.9 272.3,398.7 272.6,400.6 272.9,402.6 273.2,404.6 273.5,406.8 273.8,409.1 274.1,411.4 274.3,413.9 274.6,416.4 274.9,419 275.2,421.7 275.4,424.4 275.7,427.3 276,430.2 276.2,433.1 276.5,436.2 276.8,439.3 277,442.5 277.3,445.8 277.5,449.1 277.8,452.5 278,456 278.3,459.5 278.5,463.1 278.8,466.8 279,470.5 279.3,474.3 279.5,478.1 279.8,482 280,486 280,493.5" fill="#ffff00"/>
<polygon points="290,493.5 290,452 290.2,449.9 290.5,447.8 290.7,445.8 291,443.8 291.2,441.8 291.5,439.9 291.7,438 291.9,436.1 292.2,434.2 292.4,432.4 292.7,430.7 292.9,429 293.2,427.3 293.4,425.6 293.6,424 293.9,422.4 294.1,420.9 294.4,419.4 294.6,417.9 294.8,416.5 295.1,415.1 295.3,413.8 295.5,412.5 295.8,411.2 296,410 296.2,408.9 296.5,407.8 296.7,406.7 296.9,405.7 297.2,404.8 297.4,403.9 297.6,403 297.9,402.3 298.1,401.5 298.3,400.9 298.5,400.3 298.8,399.8 299,399.4 299.2,399.1 299.4,399 300,399.2 300.4,399.7 300.8,400.4 301.1,401.2 301.5,402.1 301.8,403.2 302.1,404.4 302.4,405.6 302.7,407 303,408.5 303.3,410 303.6,411.7 303.9,413.4 304.1,415.2 304.4,417.1 304.7,419.1 304.9,421.1 305.2,423.2 305.5,425.4 305.7,427.7 306,430 306.2,432.4 306.5,434.9 306.7,437.4 307,440 307.2,442.7 307.4,445.4 307.7,448.2 307.9,451 308.1,453.9 308.4,456.9 308.6,459.9 308.8,463 309.1,466.1 309.3,469.3 309.5,472.5 309.7,475.8 310,479.1 310.2,482.5 310.4,486 310.4,493.5" fill="#ffff00"/>
<polygon points="324.4,493.5 324.4,470 324.5,468.1 324.6,466.1 324.8,464.3 324.9,462.4 325,460.6 325.1,458.8 325.3,457 325.4,455.3 325.5,453.6 325.6,451.9 325.8,450.3 325.9,448.7 326,447.1 326.2,445.6 326.3,444.1 326.4,442.6 326.6,441.2 326.7,439.8 326.8,438.5 327,437.2 327.1,435.9 327.3,434.7 327.4,433.5 327.6,432.3 327.7,431.2 327.9,430.1 328.1,429.1 328.2,428.1 328.4,427.2 328.6,426.3 328.7,425.5 328.9,424.7 329.1,424 329.3,423.4 329.5,422.8 329.7,422.2 330,421.8 330.2,421.4 330.5,421.1 331,421 332.4,421.2 332.9,421.5 333.3,422 333.6,422.6 333.9,423.3 334.2,424.1 334.5,425 334.7,425.9 334.9,427 335.1,428.1 335.3,429.2 335.5,430.5 335.7,431.8 335.8,433.1 336,434.5 336.2,436 336.3,437.5 336.5,439.1 336.6,440.8 336.7,442.4 336.9,444.2 337,446 337.1,447.8 337.3,449.7 337.4,451.6 337.5,453.6 337.6,455.7 337.7,457.7 337.9,459.9 338,462 338.1,464.2 338.2,466.5 338.3,468.8 338.4,471.1 338.5,473.5 338.6,475.9 338.7,478.4 338.8,480.9 338.9,483.4 339,486 339,493.5" fill="#ffff00"/>
<polygon points="424,414 425,420 426.5,423 428,427 428.6,440 430,452 430.6,473 433.6,473 433.6,493.5 417,493.5 417,460 418.4,460 418.4,478 419,478 419,452 420,440 421.6,427 423,420" fill="#ffff00"/>
<polygon points="224,440 225.6,440 225.6,493.5 224,493.5" fill="#ffff00"/>
<polygon points="312.4,479.6 314,479.6 314,493.5 312.4,493.5" fill="#ffff00"/>
<path d="M15 493.4H488" stroke="#0000ff" stroke-width="1.4" fill="none"/>
</svg>
<div class="tl" style="left:56.7px;top:308.2px">3T</div>
<div class="tl" style="left:87.9px;top:308.2px">4T</div>
<div class="tl" style="left:119.3px;top:308.2px">5T</div>
<div class="tl" style="left:150.8px;top:308.2px">6T</div>
<div class="tl" style="left:182.3px;top:308.2px">7T</div>
<div class="tl" style="left:213.8px;top:308.2px">8T</div>
<div class="tl" style="left:245.3px;top:308.2px">9T</div>
<div class="tl" style="left:277px;top:308.2px">10T</div>
<div class="tl" style="left:308.5px;top:308.2px">11T</div>
<div class="tl" style="left:403px;top:308.2px">14T</div>
<div class="tl" style="left:56.7px;top:497.2px">3T</div>
<div class="tl" style="left:87.9px;top:497.2px">4T</div>
<div class="tl" style="left:119.3px;top:497.2px">5T</div>
<div class="tl" style="left:150.8px;top:497.2px">6T</div>
<div class="tl" style="left:182.3px;top:497.2px">7T</div>
<div class="tl" style="left:213.8px;top:497.2px">8T</div>
<div class="tl" style="left:245.3px;top:497.2px">9T</div>
<div class="tl" style="left:277px;top:497.2px">10T</div>
<div class="tl" style="left:308.5px;top:497.2px">11T</div>
<div class="tl" style="left:403px;top:497.2px">14T</div>

 <!-- group 1 -->
 <div class="grp" style="left:491px;top:127px;width:139px;height:82px;"></div>
 <div class="txt" style="left:498px;top:120px;padding:0 2px;background:#ced1da;">Info o dysku</div>
 <div class="txt" style="left:500px;top:135px;">Typ:</div>
 <div class="txt nv" style="left:545px;top:135px;">DVD+R</div>
 <div class="txt" style="left:500px;top:152px;">ID:</div>
 <div class="txt nv" style="left:545px;top:152px;">MCC 004</div>
 <div class="txt" style="left:500px;top:170px;">Data:</div>
 <div class="txt nv" style="left:545px;top:170px;">n/a</div>
 <div class="txt" style="left:500px;top:188px;">Etykieta:</div>
 <div class="txt nv" style="left:545px;top:188px;">-</div>

 <!-- group 2 -->
 <div class="grp" style="left:491px;top:218px;width:139px;height:167px;"></div>
 <div class="txt" style="left:498px;top:210px;padding:0 2px;background:#d6d8de;">Ustawienia</div>
 <div class="abs" style="left:500px;top:227px;width:84px;height:21px;border:1px solid #8a8e9c;border-right:none;background:#fff;"></div>
 <div class="abs" style="left:568px;top:228px;width:16px;height:19px;background:linear-gradient(90deg,#fff 0,#e6e6ec 35%,#b4b8c4 80%,#9ca0b0 100%);"></div>
 <svg class="abs" style="left:571px;top:232px" width="12" height="12" viewBox="0 0 12 12">
  <rect x="1.9" y="2.8" width="7.6" height="1.3" fill="#333"/>
  <path d="M2 5.2 L9.4 5.2 L5.7 9.2 Z" fill="#333"/>
 </svg>
 <div class="txt" style="left:504px;top:231px;">4 X</div>
 <!-- refresh button -->
 <div class="abs" style="left:592px;top:226px;width:23px;height:23px;border:2px solid;border-color:#f6f6fa #84848c #84848c #f6f6fa;background:#d8dae0;"></div>
 <div class="abs" style="left:596px;top:229px;width:14.4px;height:16px;border:1.5px solid #000;background:#fff;"></div>
 <svg class="abs" style="left:596px;top:229px" width="15" height="16" viewBox="0 0 15 16">
  <path d="M2.8 8.2 L2.8 5.6 C2.8 4.6 3.4 4.2 4.4 4.2 L7.4 4.2" stroke="#088a08" stroke-width="1.6" fill="none" stroke-dasharray="2.6 .5"/>
  <path d="M6.2 1.2 L9.8 4.2 L6.2 7.2 Z" fill="#088a08"/>
  <path d="M11.2 7.6 L11.2 10.4 C11.2 11.4 10.6 11.8 9.6 11.8 L6.8 11.8" stroke="#088a08" stroke-width="1.6" fill="none" stroke-dasharray="2.6 .5"/>
  <path d="M8 8.8 L4.4 11.8 L8 14.8 Z" fill="#088a08"/>
 </svg>
 <div class="txt" style="left:500px;top:256px;">Położer</div>
 <div class="radio" style="left:500px;top:277px;"></div>
 <div class="txt" style="left:516px;top:277px;">Inner zone</div>
 <div class="radio" style="left:500px;top:295px;"></div>
 <div class="txt" style="left:516px;top:294.7px;">Middle zone</div>
 <div class="radio" style="left:500px;top:313px;"></div>
 <div class="abs" style="left:504px;top:317px;width:5px;height:5px;border-radius:50%;background:#000;"></div>
 <div class="txt" style="left:516px;top:312.8px;">Outer zone</div>
 <div class="radio" style="left:500px;top:331px;"></div>
 <div class="txt" style="left:516px;top:330.8px;">User defined</div>
 <div class="abs" style="left:500px;top:354px;width:60px;height:20px;border:1px solid #000;background:#fff;"></div>
 <div class="txt" style="left:504px;top:357px;">3824 MB</div>

 <!-- group 3 -->
 <div class="grp" style="left:491px;top:393px;width:139px;height:121px;"></div>
 <div class="txt" style="left:500px;top:405px;">DC jitter</div>
 <div class="txt nv" style="left:578px;top:405px;">7.9 %</div>
 <div class="txt" style="left:500px;top:426px;">Peak shift</div>
 <div class="txt" style="left:578px;top:426px;">4.6 %</div>
</div>
</body>
</html>
